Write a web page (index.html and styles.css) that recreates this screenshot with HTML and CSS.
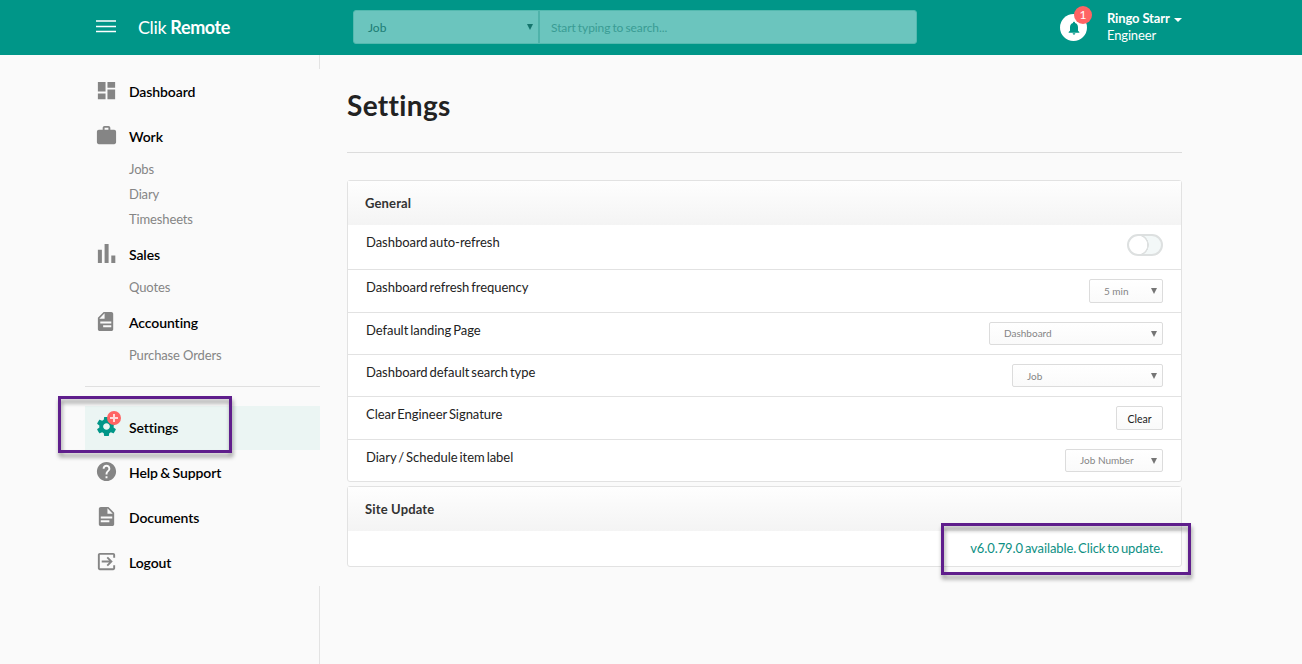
FILE: index.html
```html
<!DOCTYPE html>
<html lang="en">
<head>
<meta charset="utf-8">
<title>Clik Remote - Settings</title>
<link rel="stylesheet" href="styles.css">
</head>
<body>
<header class="topbar">
  <svg class="burger" viewBox="0 0 20 14" aria-hidden="true"><path d="M0 2h20M0 7.500h20M0 12.500h20" stroke="#fff" stroke-width="1.600"/></svg>
  <div class="brand">Clik <b>Remote</b></div>
  <div class="search">
    <div class="search-type"><span>Job</span><i class="arrow"></i></div>
    <div class="search-input">Start typing to search...</div>
  </div>
  <div class="bell">
    <svg viewBox="0 0 24 24" aria-hidden="true"><path d="M12 22c1.1 0 2-.9 2-2h-4c0 1.1.9 2 2 2zm6-6v-5c0-3.07-1.64-5.64-4.5-6.32V4c0-.83-.67-1.5-1.5-1.5s-1.5.67-1.5 1.5v.68C7.63 5.36 6 7.92 6 11v5l-2 2v1h16v-1l-2-2z"/></svg>
    <span class="bell-count">1</span>
  </div>
  <div class="user">
    <div class="user-name">Ringo Starr<i class="caret"></i></div>
    <div class="user-role">Engineer</div>
  </div>
</header>

<div class="page">
  <aside class="sidebar">
    <nav class="nav">
      <a class="item"><svg viewBox="0 0 24 24"><path d="M3 13h8V3H3v10zm0 8h8v-6H3v6zm10 0h8V11h-8v10zm0-18v6h8V3h-8z"/></svg><span>Dashboard</span></a>
      <a class="item"><svg viewBox="0 0 24 24"><path d="M20 6h-4V4c0-1.11-.89-2-2-2h-4c-1.11 0-2 .89-2 2v2H4c-1.11 0-2 .89-2 2v11c0 1.11.89 2 2 2h16c1.11 0 2-.89 2-2V8c0-1.11-.89-2-2-2zm-6 0h-4V4h4v2z"/></svg><span>Work</span></a>
      <div class="sub"><a>Jobs</a><a>Diary</a><a>Timesheets</a></div>
      <a class="item"><svg viewBox="0 0 24 24"><path d="M3 8h4.200v14H3zM10 2h4.200v20H10zM17 14h4.200v8H17z"/></svg><span>Sales</span></a>
      <div class="sub"><a>Quotes</a></div>
      <a class="item"><svg viewBox="0 0 24 24"><path d="M9 2H17c1.100 0 2 .9 2 2v16c0 1.100-.9 2-2 2H5c-1.100 0-2-.9-2-2V8zM10 3.500L4.500 9H10zM5.500 12v2H17v-2zm3 4v2H17v-2z" fill-rule="evenodd"/></svg><span>Accounting</span></a>
      <div class="sub"><a>Purchase Orders</a></div>
      <hr class="divider">
      <a class="item active"><svg viewBox="0 0 24 24"><path d="M19.430 12.980c.04-.32.07-.64.07-.98s-.03-.66-.07-.98l2.110-1.650c.19-.15.24-.42.12-.64l-2-3.460c-.12-.22-.39-.3-.61-.22l-2.490 1c-.52-.4-1.080-.73-1.690-.98l-.38-2.650C14.460 2.180 14.250 2 14 2h-4c-.25 0-.46.18-.49.42l-.38 2.650c-.61.25-1.170.59-1.690.98l-2.490-1c-.23-.09-.49 0-.61.22l-2 3.460c-.13.22-.07.49.12.64l2.110 1.650c-.04.32-.07.65-.07.98s.03.66.07.98l-2.110 1.650c-.19.15-.24.42-.12.64l2 3.460c.12.22.39.3.61.22l2.490-1c.52.4 1.080.73 1.690.98l.38 2.650c.03.24.24.42.49.42h4c.25 0 .46-.18.49-.42l.38-2.650c.61-.25 1.170-.59 1.690-.98l2.490 1c.23.09.49 0 .61-.22l2-3.460c.12-.22.07-.49-.12-.64l-2.110-1.650zM12 15.500c-1.930 0-3.500-1.570-3.500-3.500s1.570-3.500 3.500-3.500 3.500 1.570 3.500 3.500-1.570 3.500-3.500 3.500z"/></svg><span>Settings</span><i class="plus"></i></a>
      <a class="item"><svg viewBox="0 0 24 24"><path d="M12 2C6.480 2 2 6.480 2 12s4.480 10 10 10 10-4.480 10-10S17.520 2 12 2zm1 17h-2v-2h2v2zm2.070-7.750l-.9.920C13.450 12.900 13 13.500 13 15h-2v-.5c0-1.100.45-2.100 1.170-2.830l1.240-1.260c.37-.36.59-.86.59-1.410 0-1.100-.9-2-2-2s-2 .9-2 2H8c0-2.210 1.790-4 4-4s4 1.790 4 4c0 .88-.36 1.680-.93 2.250z"/></svg><span>Help &amp; Support</span></a>
      <a class="item"><svg viewBox="0 0 24 24"><path d="M14 2H6c-1.100 0-1.990.9-1.990 2L4 20c0 1.100.89 2 1.990 2H18c1.100 0 2-.9 2-2V8l-6-6zm4 16H6v-2h9v2h3zm0-4H6v-2h12v2zm-5-5V3.500L18.500 9H13z"/></svg><span>Documents</span></a>
      <a class="item"><svg viewBox="0 0 24 24"><path d="M12.090 15.590L13.500 17l5-5-5-5-1.410 1.410L14.670 11H7v2h7.670l-2.580 2.590zM19 3H5c-1.110 0-2 .9-2 2v14c0 1.100.89 2 2 2h14c1.100 0 2-.9 2-2v-3h-2v3H5V5h14v3h2V5c0-1.100-.9-2-2-2z"/></svg><span>Logout</span></a>
    </nav>
  </aside>

  <main class="main">
    <h1>Settings</h1>
    <section class="panel">
      <h2>General</h2>
      <div class="row"><span>Dashboard auto-refresh</span><div class="toggle"></div></div>
      <div class="row"><span>Dashboard refresh frequency</span><div class="select tall s-freq">5 min<i class="arrow"></i></div></div>
      <div class="row"><span>Default landing Page</span><div class="select s-land">Dashboard<i class="arrow"></i></div></div>
      <div class="row"><span>Dashboard default search type</span><div class="select s-type">Job<i class="arrow"></i></div></div>
      <div class="row"><span>Clear Engineer Signature</span><div class="button">Clear</div></div>
      <div class="row"><span>Diary / Schedule item label</span><div class="select s-label">Job Number<i class="arrow"></i></div></div>
    </section>
    <section class="panel">
      <h2>Site Update</h2>
      <div class="update"><a>v6.0.79.0 available. Click to update.</a></div>
    </section>
  </main>
</div>

<div class="mark mark-nav"></div>
<div class="mark mark-update"></div>
</body>
</html>
```
FILE: styles.css
```css
* { box-sizing: border-box; }
body {
  margin: 0;
  height: 664px;
  overflow: hidden;
  position: relative;
  display: flex;
  flex-direction: column;
  background: #fafafa;
  color: #222;
  font-family: Lato, "Liberation Sans", sans-serif;
  font-size: 13px;
  font-variant-ligatures: none;
}

/* Top bar */
.topbar {
  flex: none;
  height: 55px;
  display: flex;
  align-items: flex-start;
  padding-left: 96px;
  background: #009688;
  color: #fff;
}
.burger { width: 20px; height: 14px; margin-top: 19px; }
.brand {
  width: 215px;
  margin-left: 22px;
  padding-top: 15px;
  font-size: 18px;
  line-height: 24px;
  letter-spacing: -0.4px;
  white-space: nowrap;
}
.search {
  width: 564px;
  height: 34px;
  margin-top: 10px;
  display: flex;
  border: 1px solid #53b9af;
  border-radius: 3px;
  background: #6bc5be;
  font-size: 12px;
  line-height: 33px;
}
.search-type {
  width: 186px;
  padding: 0 5px 0 14px;
  display: flex;
  justify-content: space-between;
  border-right: 2px solid #4fb3aa;
  color: #1c7d75;
}
.search-type .arrow { margin-top: 13px; color: #15756d; }
.search-input { padding-left: 11px; color: #3a9c94; letter-spacing: -0.1px; word-spacing: -0.8px; }
.arrow {
  width: 0;
  height: 0;
  border: 3px solid transparent;
  border-top: 6px solid currentColor;
  border-bottom: 0;
}
.bell {
  position: relative;
  width: 27px;
  height: 27px;
  margin: 14px 0 0 143px;
  display: flex;
  align-items: center;
  justify-content: center;
  border-radius: 50%;
  background: #fff;
}
.bell svg { width: 16px; height: 16px; fill: #009688; }
.bell-count {
  position: absolute;
  left: 14px;
  top: -8px;
  width: 18px;
  height: 18px;
  border-radius: 50%;
  background: #ff6464;
  font-size: 12px;
  line-height: 18px;
  text-align: center;
}
.user { margin-left: 20px; padding-top: 10px; line-height: 17px; letter-spacing: -0.15px; }
.user-name { display: flex; align-items: center; font-weight: 700; }
.caret {
  margin: 2px 0 0 4px;
  border: 4px solid transparent;
  border-top-color: #fff;
  border-bottom: 0;
}

/* Layout */
.page { flex: 1; display: flex; padding-left: 85px; }
.sidebar {
  width: 235px;
  padding-top: 14px;
  background: linear-gradient(#e3e3e3, #e3e3e3) right top / 1px 100% no-repeat;
}
.nav { padding-bottom: 1px; background: #fafafa; }
.item {
  position: relative;
  height: 45px;
  display: flex;
  align-items: center;
  padding-left: 10px;
  color: #000;
  font-size: 14px;
  font-weight: 600;
  letter-spacing: -0.1px;
  word-spacing: -1px;
}
.item svg { width: 23px; height: 23px; margin-right: 11px; fill: #858585; transform: translateY(-1px); }
.sub { margin-top: -2px; padding-left: 44px; color: #858585; letter-spacing: -0.13px; }
.sub a { display: block; line-height: 25px; }
.divider { height: 1px; margin: 18px 0 19px; border: 0; background: #e0e0e0; }
.active { height: 44px; padding-bottom: 1px; background: #ebf5f3; }
.active svg { fill: #009688; }
.plus {
  position: absolute;
  left: 22px;
  top: 5px;
  width: 14px;
  height: 14px;
  border-radius: 50%;
  background:
    linear-gradient(#fff, #fff) center / 8px 2px no-repeat,
    linear-gradient(#fff, #fff) center / 2px 8px no-repeat,
    #ff6464;
  background:
    linear-gradient(#ffd9d9, #ffd9d9) center / 8px 2px no-repeat,
    linear-gradient(#ffd9d9, #ffd9d9) center / 2px 8px no-repeat,
    #ff6464;
}

/* Settings */
.main { width: 835px; margin-left: 27px; }
h1 {
  height: 98px;
  margin: 0 0 27px;
  padding-top: 32px;
  border-bottom: 1px solid #dcdcdc;
  font-size: 28px;
  line-height: 36px;
  font-weight: 700;
  letter-spacing: 0.35px;
}
.panel {
  margin-bottom: 4px;
  border: 1px solid #e2e2e2;
  border-radius: 3px;
  background: #fff;
}
h2 {
  margin: 0;
  height: 44px;
  padding-left: 17px;
  background: linear-gradient(#fefefe, #f4f4f4);
  color: #333;
  font-size: 13px;
  font-weight: 700;
  letter-spacing: 0.15px;
  line-height: 44px;
}
.row {
  display: flex;
  justify-content: space-between;
  align-items: flex-start;
  padding: 9px 18px;
  border-bottom: 1px solid #e2e2e2;
  line-height: 17px;
  letter-spacing: -0.04px;
  word-spacing: -1.3px;
}
.row:nth-of-type(1) { padding-bottom: 13px; }
.row:last-child { border-bottom: 0; }
.toggle {
  width: 36px;
  height: 22px;
  border: 2px solid #dde0e0;
  border-radius: 11px;
  background: radial-gradient(circle at 9px 9px, #fff 9px, #dde0e0 9.500px 10.500px, #f3f8f8 11px);
}
.select, .button {
  height: 23px;
  border: 1px solid #dcdcdc;
  border-radius: 2px;
  background: linear-gradient(#fff, #fafafa);
  font-size: 10px;
  line-height: 22px;
  letter-spacing: 0;
  word-spacing: 0;
}
.select {
  display: flex;
  justify-content: space-between;
  padding: 0 5px 0 14px;
  color: #858585;
}
.select .arrow { margin-top: 8px; color: #757575; }
.tall, .button { height: 24px; }
.s-freq { width: 74px; }
.s-land { width: 174px; line-height: 21px; }
.s-type { width: 151px; }
.s-label { width: 98px; line-height: 21px; }
.button { width: 47px; color: #222; font-size: 10.500px; line-height: 25px; text-align: center; }
.update {
  height: 35px;
  padding-right: 18px;
  color: #0d8f83;
  line-height: 34px;
  letter-spacing: -0.1px;
  word-spacing: -1.300px;
  text-align: right;
}

/* Highlight frames */
.mark {
  position: absolute;
  border: 3px solid #5f1e8c;
  filter: drop-shadow(1px 4px 2px rgba(0, 0, 0, 0.4));
}
.mark-nav { left: 58px; top: 396px; width: 174px; height: 57px; }
.mark-update { left: 941px; top: 523px; width: 250px; height: 52px; }
```
